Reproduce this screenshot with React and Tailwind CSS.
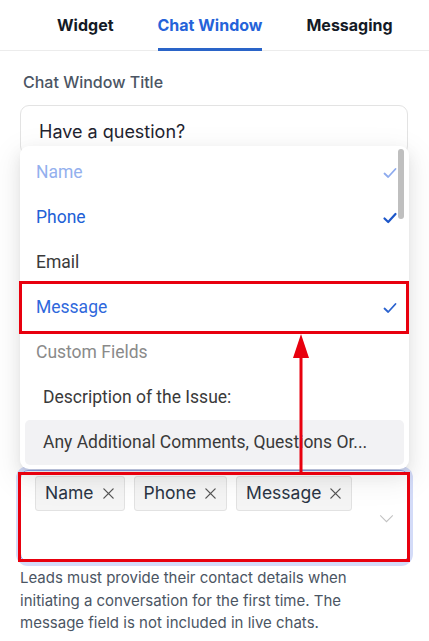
import React from "react";

const Check = ({ className }) => (
  <svg viewBox="0 0 16 16" className={className} fill="none" stroke="currentColor" strokeWidth="1.8" strokeLinecap="round" strokeLinejoin="round">
    <path d="M2.5 8.5 6.2 12 13.5 4" />
  </svg>
);

const Cross = () => (
  <svg viewBox="0 0 14 14" className="w-[13px] h-[13px] text-[#555]" fill="none" stroke="currentColor" strokeWidth="1.4" strokeLinecap="round">
    <path d="M2 2l10 10M12 2 2 12" />
  </svg>
);

function Tag({ label }) {
  return (
    <div className="flex items-center gap-[8px] h-[35px] px-[9px] bg-[#f5f5f5] border border-[#e2e2e2] rounded-[3px] text-[17.5px] text-[#2a3444]">
      <span>{label}</span>
      <Cross />
    </div>
  );
}

function Option({ label, tone, check }) {
  return (
    <div className={`flex items-center justify-between h-[45px] pl-[11px] pr-[6px] ${tone}`}>
      <span>{label}</span>
      {check}
    </div>
  );
}

export default function App() {
  return (
    <div className="relative w-[429px] h-[641px] bg-white overflow-hidden" style={{ fontFamily: "Inter, 'Noto Sans', sans-serif" }}>
      {/* tabs */}
      <div className="flex h-[51px] pl-[57px] gap-[44px] border-b border-[#ececec] text-[16px] font-bold">
        <div className="flex items-center text-[#141a26]">Widget</div>
        <div className="relative flex items-center text-[#2563d9]">
          Chat Window
          <div className="absolute left-0 right-0 bottom-[-1px] h-[3px] bg-[#2a64c8]" />
        </div>
        <div className="flex items-center text-[#141a26]">Messaging</div>
      </div>

      <div className="relative px-5 pt-[19px]">
        <div className="pl-[3px] text-[16px] leading-6 font-medium text-[#4b5563]">Chat Window Title</div>
        <div className="mt-[11px] h-[50px] w-[388px] rounded-[9px] border border-[#e3e3e3] pl-[18px] pt-[13px] text-[18px] leading-[26px] text-[#1f2430]">
          Have a question?
        </div>

        {/* required fields select */}
        <div className="mt-[315px] w-[389px] h-[92px] rounded-[8px] border border-[#8aa4f0] shadow-[0_0_0_4px_#d3dbf8] pl-[14px] pr-[14px] pt-[5px] flex justify-between">
          <div className="flex gap-[9px] items-start">
            <Tag label="Name" />
            <Tag label="Phone" />
            <Tag label="Message" />
          </div>
          <svg viewBox="0 0 16 10" className="mt-[38px] w-[15px] h-[9px] text-[#c2c2c2]" fill="none" stroke="currentColor" strokeWidth="1.2">
            <path d="M1 1.5 8 8.5 15 1.5" />
          </svg>
        </div>

        <p className="mt-[5px] w-[372px] text-[15px] leading-[22.5px] text-[#4b5563]">
          Leads must provide their contact details when initiating a conversation for the first time. The message field is not included in live chats.
        </p>

        {/* dropdown menu */}
        <div
          className="absolute left-5 top-[95px] w-[389px] h-[323px] bg-white rounded-[9px] p-[5px] pt-[4px] shadow-[0_6px_16px_rgba(0,0,0,0.08),0_3px_6px_-4px_rgba(0,0,0,0.12),0_9px_28px_8px_rgba(0,0,0,0.05)] text-[17.5px]"
          style={{ fontFamily: "Roboto, 'Noto Sans', sans-serif" }}
        >
          <div className="relative">
            <Option label="Name" tone="text-[#93b0ee]" check={<Check className="w-[16px] h-[16px] text-[#8eabee]" />} />
            <Option label="Phone" tone="text-[#2160d6]" check={<Check className="w-[16px] h-[16px] text-[#1c56c9] stroke-[2.2]" />} />
            <Option label="Email" tone="text-[#3a3a3a]" />
            <Option label="Message" tone="text-[#2f68dc]" check={<Check className="w-[16px] h-[16px] text-[#2a62cf]" />} />
            <div className="flex items-center h-[45px] pl-[11px] text-[#8a8a8a]">Custom Fields</div>
            <div className="flex items-center h-[45px] pl-[18px] text-[#3a3a3a]">Description of the Issue:</div>
            <div className="flex items-center h-[45px] pl-[18px] rounded-[5px] bg-[#f2f2f4] text-[#3a3a3a]">
              Any Additional Comments, Questions Or...
            </div>
            <div className="absolute right-0 top-[-1px] w-[6px] h-[70px] rounded-full bg-[#bfbfbf]" />
          </div>
        </div>
      </div>

      {/* annotation overlay */}
      <div className="absolute left-[19px] top-[281px] w-[390px] h-[53px] border-[3px] border-[#e8000e]" />
      <div className="absolute left-[18px] top-[472px] w-[392px] h-[90px] border-[3px] border-[#e8000e]" />
      <svg className="absolute left-[290px] top-[332px] w-[22px] h-[142px]" viewBox="0 0 22 142">
        <path d="M11 2 19 26 3 26Z" fill="#e8000e" />
        <rect x="9.5" y="24" width="3" height="118" fill="#e8000e" />
      </svg>
    </div>
  );
}
